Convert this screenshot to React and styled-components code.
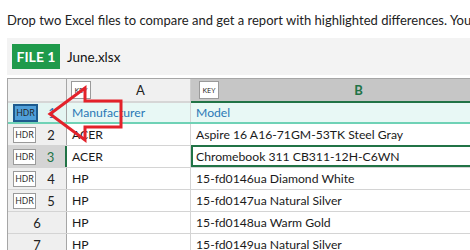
import React from "react";
import styled, { createGlobalStyle } from "styled-components";

const GlobalStyle = createGlobalStyle`
    body{
        margin: 0;
        background: white;
        font-family: Lato, "Open Sans", sans-serif;
        color: #222;
    }
`;

const Page = styled.div`
    position: relative;
    width: 470px;
    height: 250px;
    overflow: hidden;
`,
Intro = styled.p`
    margin: 0;
    height: 38px;
    padding: 0 0 0 7px;
    line-height: 40px;
    font-size: 13px;
    white-space: nowrap;
`,
FileBar = styled.div`
    display: flex;
    align-items: center;
    gap: 7px;
    margin-left: 7px;
    height: 37px;
    padding-left: 5px;
    background: #f3f3f3;
`,
Badge = styled.span`
    display: flex;
    align-items: center;
    justify-content: center;
    width: 48px;
    height: 25px;
    background: #1f9a4b;
    color: white;
    font-weight: 700;
    font-size: 14px;
`,
FileName = styled.span`
    font-size: 13.5px;
    color: #111;
`,
Sheet = styled.div`
    margin: 3px 0 0 7px;
    border-top: 1px solid #a6a6a6;
    border-left: 1px solid #a6a6a6;
    width: 492px;
    font-size: 12.2px;
`,
Row = styled.div`
    display: flex;
    height: ${p => p.$h || 22}px;
    background: ${p => p.$bg || "white"};
    border-bottom: ${p => p.$line || "1px solid #d4d4d4"};
    box-sizing: border-box;
`,
RowHead = styled.div`
    display: flex;
    align-items: center;
    width: 59px;
    padding-left: 5px;
    box-sizing: border-box;
    flex-shrink: 0;
    background: ${p => p.$bg || "#efefef"};
    border-right: ${p => p.$sel ? "2px solid #217346" : "1px solid #a6a6a6"};
    color: ${p => p.$color || "#222"};
    font-size: 13px;
`,
Corner = styled(RowHead)`
    background: #f0f0f0;
    border-bottom: 2px solid #d6d6d6;
`,
Num = styled.span`
    flex: 1;
    text-align: center;
    padding-right: ${p => p.$pad ? 0 : 5}px;
`,
Hdr = styled.span`
    width: 21px;
    height: 14px;
    display: flex;
    align-items: center;
    justify-content: center;
    font-family: "Open Sans", sans-serif;
    font-size: 9px;
    background: ${p => p.$on ? "#4f9fd9" : "white"};
    border: ${p => p.$on ? "2px solid #1d5a8e" : "1px solid #9a9a9a"};
    color: #222;
`,
Cell = styled.div`
    display: flex;
    align-items: center;
    width: ${p => p.$w}px;
    flex-shrink: 0;
    box-sizing: border-box;
    padding-left: 5px;
    border-right: 1px solid #d4d4d4;
    color: ${p => p.$color || "#1a1a1a"};
    white-space: nowrap;
    box-shadow: ${p => p.$sel ? "inset 0 0 0 2px #217346" : "none"};
    margin-top: ${p => p.$sel ? "-1px" : 0};
`,
ColHead = styled.div`
    display: flex;
    align-items: center;
    width: ${p => p.$w}px;
    flex-shrink: 0;
    box-sizing: border-box;
    padding-left: ${p => p.$pad}px;
    background: ${p => p.$sel ? "#c6c6c6" : "#f0f0f0"};
    border-right: 1px solid #d0d0d0;
    border-bottom: 2px solid ${p => p.$sel ? "#217346" : "#d6d6d6"};
    color: ${p => p.$sel ? "#217346" : "#222"};
    font-weight: ${p => p.$sel ? 700 : 400};
    font-size: 13px;
`,
Key = styled.span`
    width: 18px;
    height: 16px;
    display: flex;
    align-items: center;
    justify-content: center;
    background: white;
    border: 1px solid #9a9a9a;
    font-family: "Open Sans", sans-serif;
    font-size: 7.5px;
    font-weight: 400;
    color: #222;
`,
Letter = styled.span`
    flex: 1;
    text-align: center;
`,
Arrow = styled.svg`
    position: absolute;
    left: 0;
    top: 0;
    pointer-events: none;
`;

const rows = [
    { n: 2, a: "ACER", b: "Aspire 16 A16-71GM-53TK Steel Gray", hdr: true },
    { n: 3, a: "ACER", b: "Chromebook 311 CB311-12H-C6WN", hdr: true, sel: true },
    { n: 4, a: "HP", b: "15-fd0146ua Diamond White", hdr: true },
    { n: 5, a: "HP", b: "15-fd0147ua Natural Silver", hdr: true },
    { n: 6, a: "HP", b: "15-fd0148ua Warm Gold" },
    { n: 7, a: "HP", b: "15-fd0149ua Natural Silver" },
];

const App = () => (
    <Page>
        <GlobalStyle />
        <Intro>Drop two Excel files to compare and get a report with highlighted differences. You can</Intro>
        <FileBar>
            <Badge>FILE 1</Badge>
            <FileName>June.xlsx</FileName>
        </FileBar>
        <Sheet>
            <Row $h={24} $bg="#f0f0f0" $line="none">
                <Corner />
                <ColHead $w={124} $pad={4}><Key>KEY</Key><Letter>A</Letter></ColHead>
                <ColHead $w={308} $pad={8} $sel><Key>KEY</Key><Letter>B</Letter></ColHead>
            </Row>
            <Row $h={21} $bg="#e8f8f5" $line="2px solid #6fd2b6">
                <RowHead $bg="#e4f5f2" $color="#2b78b5"><Hdr $on>HDR</Hdr><Num $pad>1</Num></RowHead>
                <Cell $w={124} $color="#2b78b5">Manufacturer</Cell>
                <Cell $w={308} $color="#2b78b5">Model</Cell>
            </Row>
            {rows.map(r =>
                <Row key={r.n}>
                    <RowHead $bg={r.sel ? "#d4d4d4" : undefined} $color={r.sel ? "#217346" : undefined} $sel={r.sel}>
                        {r.hdr && <Hdr>HDR</Hdr>}
                        <Num $pad={r.hdr}>{r.n}</Num>
                    </RowHead>
                    <Cell $w={124}>{r.a}</Cell>
                    <Cell $w={308} $sel={r.sel}>{r.b}</Cell>
                </Row>
            )}
        </Sheet>
        <Arrow width="470" height="250" viewBox="0 0 470 250">
            <polygon
                points="50,114 85,88 85,101 121,101 121,127 85,127 85,140"
                fill="none"
                stroke="#e3222b"
                strokeWidth="3"
                strokeLinejoin="miter"
            />
        </Arrow>
    </Page>
);

export default App;
